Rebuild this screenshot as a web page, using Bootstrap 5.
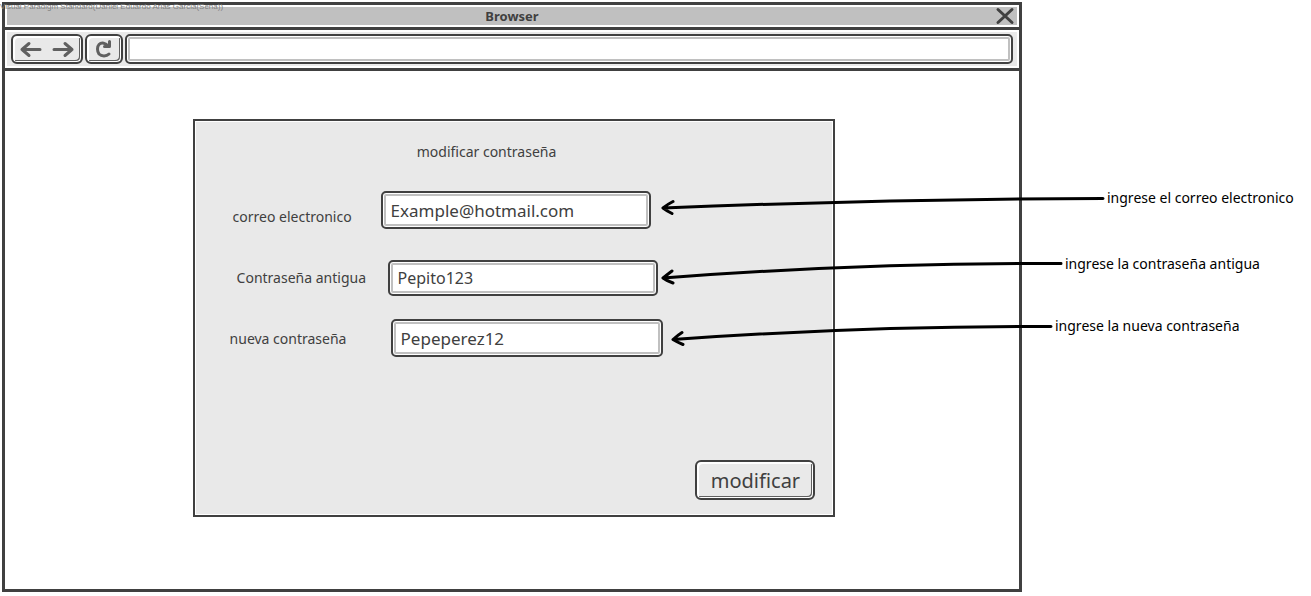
<!DOCTYPE html>
<html lang="es">
<head>
<meta charset="utf-8">
<meta name="viewport" content="width=device-width, initial-scale=1">
<title>Modificar contraseña</title>
<link href="https://cdn.jsdelivr.net/npm/bootstrap@5.3.0/dist/css/bootstrap.min.css" rel="stylesheet">
<style>
  :root { --ink: #404040; --face: #e9e9e9; --shade: #c0c0c0; }
  body { font-family: "Noto Sans", sans-serif; font-size: 14px; line-height: 20px; color: var(--ink); background: #fff; }
  .watermark { top: 2px; left: 0; font: 8px/10px "Liberation Sans", sans-serif; color: #808080; z-index: 2; }
  .canvas { padding: 2px 0 4px 2px; }
  .browser { border: 3px solid var(--ink); }
  .strip { border-bottom: 3px solid var(--ink); padding: 2px; }
  .title-strip { background: var(--shade); height: 18px; }
  .title-strip h1 { font-size: 13px; line-height: 20px; font-weight: 700; }
  .close-btn { width: 20px; height: 18px; right: 2px; }
  .tool-strip { background: var(--face); padding: 2px 4px; gap: 2px; }
  .sketch-btn { background: var(--face); color: var(--ink); border: 2px solid var(--ink); border-radius: 6px; box-shadow: inset 1px 1px 0 #fff, inset -1px -1px 0 #fff, inset 2px 2px 0 #fff, inset -2px -2px 0 #606060; }
  .sketch-input { border: 2px solid var(--ink); border-radius: 5px; background: #fff; color: var(--ink); box-shadow: inset 0 0 0 1px #fff, inset 0 0 0 3px var(--shade); padding: 0 8px; outline: 0; min-width: 0; }
  .history { width: 72px; height: 30px; gap: 8px; color: #606060; }
  .history button, .close-btn { color: inherit; }
  .reload { width: 38px; height: 30px; color: #606060; }
  .address { height: 30px; }
  .dialog-box { width: 63.4%; min-height: 398px; margin-top: 48px; margin-left: 18.5%; border: 2px solid var(--ink); background: var(--face); box-shadow: inset 0 0 0 1px #fff; padding: 21px 18px 15px 33px; }
  .dialog-box h2 { font-size: 14px; line-height: 20px; margin-right: 70px; }
  .field input { width: 270px; height: 38px; font-size: 17px; }
  .field-mail { margin-top: 29px; padding-left: 5px; }
  .field-mail label { width: 148px; padding-top: 14px; }
  .field-old { margin-top: 31px; padding-left: 9px; }
  .field-old label { width: 151px; }
  .field-old input { height: 36px; font-size: 16px; }
  .field-new { margin-top: 23px; padding-left: 2px; }
  .field-new label { width: 161px; padding-top: 2px; }
  .field-new input { width: 272px; }
  .submit { width: 120px; height: 40px; font-size: 20px; line-height: 24px; padding: 2px 0 0; }
  .notes { width: 289px; color: #000; padding-top: 186px; }
  .note-mail { padding-left: 85px; margin-bottom: 46px; }
  .note-old { padding-left: 43px; margin-bottom: 42px; }
  .note-new { padding-left: 33px; }
  .arrow { fill: none; stroke: #000; stroke-width: 3; stroke-linecap: round; stroke-linejoin: round; pointer-events: none; top: 0; }
  .note-mail .arrow { right: 205px; }
  .note-old .arrow { right: 247px; }
  .note-new .arrow { right: 257px; }
  .glyph { fill: none; stroke: currentColor; stroke-width: 3; stroke-linecap: round; stroke-linejoin: round; }
</style>
</head>
<body>
<div class="watermark position-absolute text-nowrap">Visual Paradigm Standard(Daniel Eduardo Arias Garcia(Sena))</div>
<div class="canvas d-flex min-vh-100 overflow-hidden">
  <main class="browser d-flex flex-column flex-grow-1">
    <header class="strip">
      <div class="title-strip position-relative d-flex justify-content-center align-items-center">
        <h1 class="m-0">Browser</h1>
        <button type="button" class="close-btn position-absolute top-0 border-0 bg-transparent p-0 d-flex" aria-label="Cerrar">
          <svg class="glyph" width="20" height="18"><path d="M3 2.5 17 15.5M17 2.5 3 15.5"/></svg>
        </button>
      </div>
    </header>
    <div class="strip">
      <nav class="tool-strip d-flex" aria-label="Navegación">
        <div class="history sketch-btn d-flex justify-content-center align-items-center">
          <button type="button" class="border-0 bg-transparent p-0 d-flex" aria-label="Atrás">
            <svg class="glyph" width="24" height="20"><path d="M21 10.500H3M10 4.500 3 10.500l7 6"/></svg>
          </button>
          <button type="button" class="border-0 bg-transparent p-0 d-flex" aria-label="Adelante">
            <svg class="glyph" width="24" height="20"><path d="M3 10.500H21M14 4.500l7 6-7 6"/></svg>
          </button>
        </div>
        <button type="button" class="reload sketch-btn p-0 d-flex justify-content-center align-items-center" aria-label="Recargar">
          <svg class="glyph" width="20" height="20"><path d="M15 15C12.500 17.500 7.500 17.500 5 15C3 12.500 3 7.500 5 5.500C7.500 3 12 4 14 7M15.500 2.500V7.500H10.500"/></svg>
        </button>
        <input type="text" class="address sketch-input flex-grow-1" aria-label="Dirección">
      </nav>
    </div>
    <form class="dialog-box d-flex flex-column" onsubmit="return false">
      <h2 class="text-center fw-normal mb-0">modificar contraseña</h2>
      <div class="field field-mail d-flex align-items-center">
        <label for="mail">correo electronico</label>
        <input id="mail" type="text" class="sketch-input" value="Example@hotmail.com">
      </div>
      <div class="field field-old d-flex align-items-center">
        <label for="old">Contraseña antigua</label>
        <input id="old" type="text" class="sketch-input" value="Pepito123">
      </div>
      <div class="field field-new d-flex align-items-center">
        <label for="new">nueva contraseña</label>
        <input id="new" type="text" class="sketch-input" value="Pepeperez12">
      </div>
      <button type="submit" class="submit sketch-btn mt-auto align-self-end">modificar</button>
    </form>
  </main>
  <aside class="notes flex-shrink-0">
    <div class="note-mail position-relative">ingrese el correo electronico
      <svg class="arrow position-absolute" width="446" height="32"><path d="M3 20Q223 11 443 10.500M13 13.500Q8 16 3 20Q7 23 12 25.500"/></svg>
    </div>
    <div class="note-old position-relative">ingrese la contraseña antigua
      <svg class="arrow position-absolute" width="404" height="34"><path d="M3 24Q201 9 401 9.500M12 17Q8 20 3 24Q7 27 13 29"/></svg>
    </div>
    <div class="note-new position-relative">ingrese la nueva contraseña
      <svg class="arrow position-absolute" width="384" height="34"><path d="M3 23.500Q193 10 381 10.500M12 16.500Q8 19 3 23.500Q7 26 13 28.500"/></svg>
    </div>
  </aside>
</div>
<script src="https://cdn.jsdelivr.net/npm/bootstrap@5.3.0/dist/js/bootstrap.bundle.min.js"></script>
</body>
</html>
